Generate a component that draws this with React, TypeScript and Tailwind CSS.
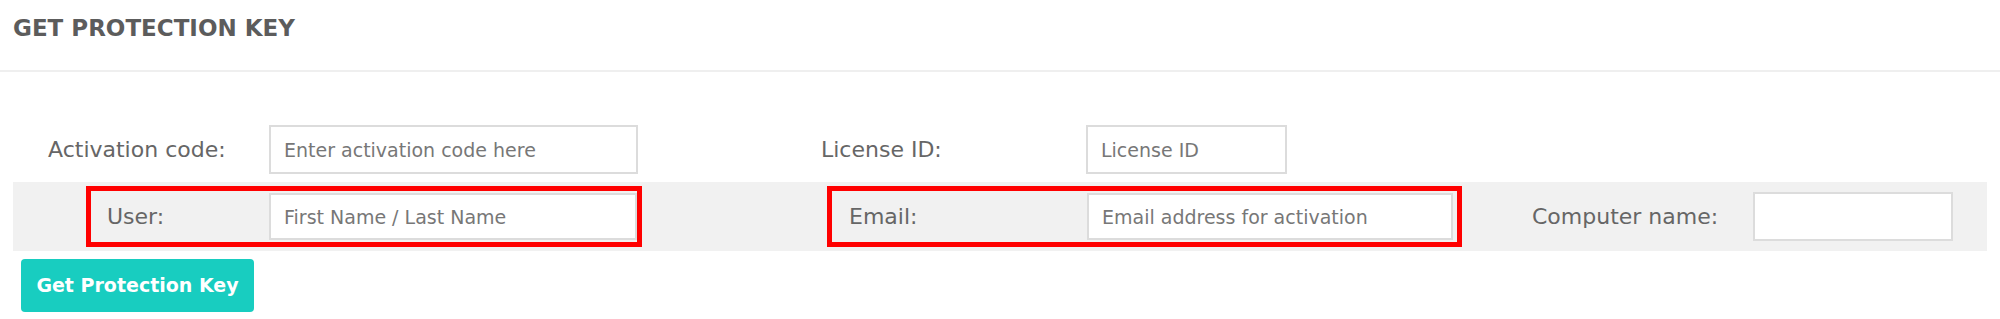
import React from 'react';

const font = { fontFamily: '"DejaVu Sans", Verdana, sans-serif' };

const Field = ({ placeholder, className }: { placeholder?: string; className: string }) => (
  <input
    type="text"
    placeholder={placeholder}
    className={`shrink-0 bg-white border-2 border-[#dcdcdc] px-[13px] text-[19px] text-[#555] placeholder:text-[#777] outline-none ${className}`}
  />
);

const Label = ({ children, className }: { children: React.ReactNode; className: string }) => (
  <span className={`shrink-0 text-[22px] leading-[28px] text-[#666] ${className}`}>{children}</span>
);

export default function App() {
  return (
    <div className="w-[2000px] h-[319px] bg-white overflow-hidden" style={font}>
      {/* header */}
      <div className="h-[70px] px-[13px] pt-[14px]">
        <h1 className="text-[23px] leading-[28px] font-bold text-[#5c5c5c]">GET PROTECTION KEY</h1>
      </div>
      <div className="h-[2px] bg-[#efefef]" />

      {/* row 1 */}
      <div className="mt-[53px] flex items-center pl-[48px]">
        <Label className="w-[221px]">Activation code:</Label>
        <Field placeholder="Enter activation code here" className="w-[369px] h-[49px]" />
        <Label className="ml-[183px] w-[265px]">License ID:</Label>
        <Field placeholder="License ID" className="w-[201px] h-[49px]" />
      </div>

      {/* row 2 */}
      <div className="mt-[8px] ml-[13px] w-[1974px] h-[69px] bg-[#f1f1f1] flex items-center pl-[73px]">
        <div className="w-[556px] h-[61px] border-[5px] border-[#ff0000] flex items-center pl-[16px]">
          <Label className="w-[162px]">User:</Label>
          <Field placeholder="First Name / Last Name" className="w-[368px] h-[47px]" />
        </div>
        <div className="ml-[185px] w-[635px] h-[61px] border-[5px] border-[#ff0000] flex items-center pl-[17px]">
          <Label className="w-[238px]">Email:</Label>
          <Field placeholder="Email address for activation" className="w-[366px] h-[47px]" />
        </div>
        <Label className="ml-[70px] w-[221px]">Computer name:</Label>
        <Field className="w-[200px] h-[49px]" />
      </div>

      {/* action */}
      <div className="mt-[8px] pl-[21px]">
        <button className="w-[233px] h-[53px] rounded-[4px] bg-[#18cdc0] text-white text-[19px] font-bold flex items-center justify-center">
          Get Protection Key
        </button>
      </div>
    </div>
  );
}
